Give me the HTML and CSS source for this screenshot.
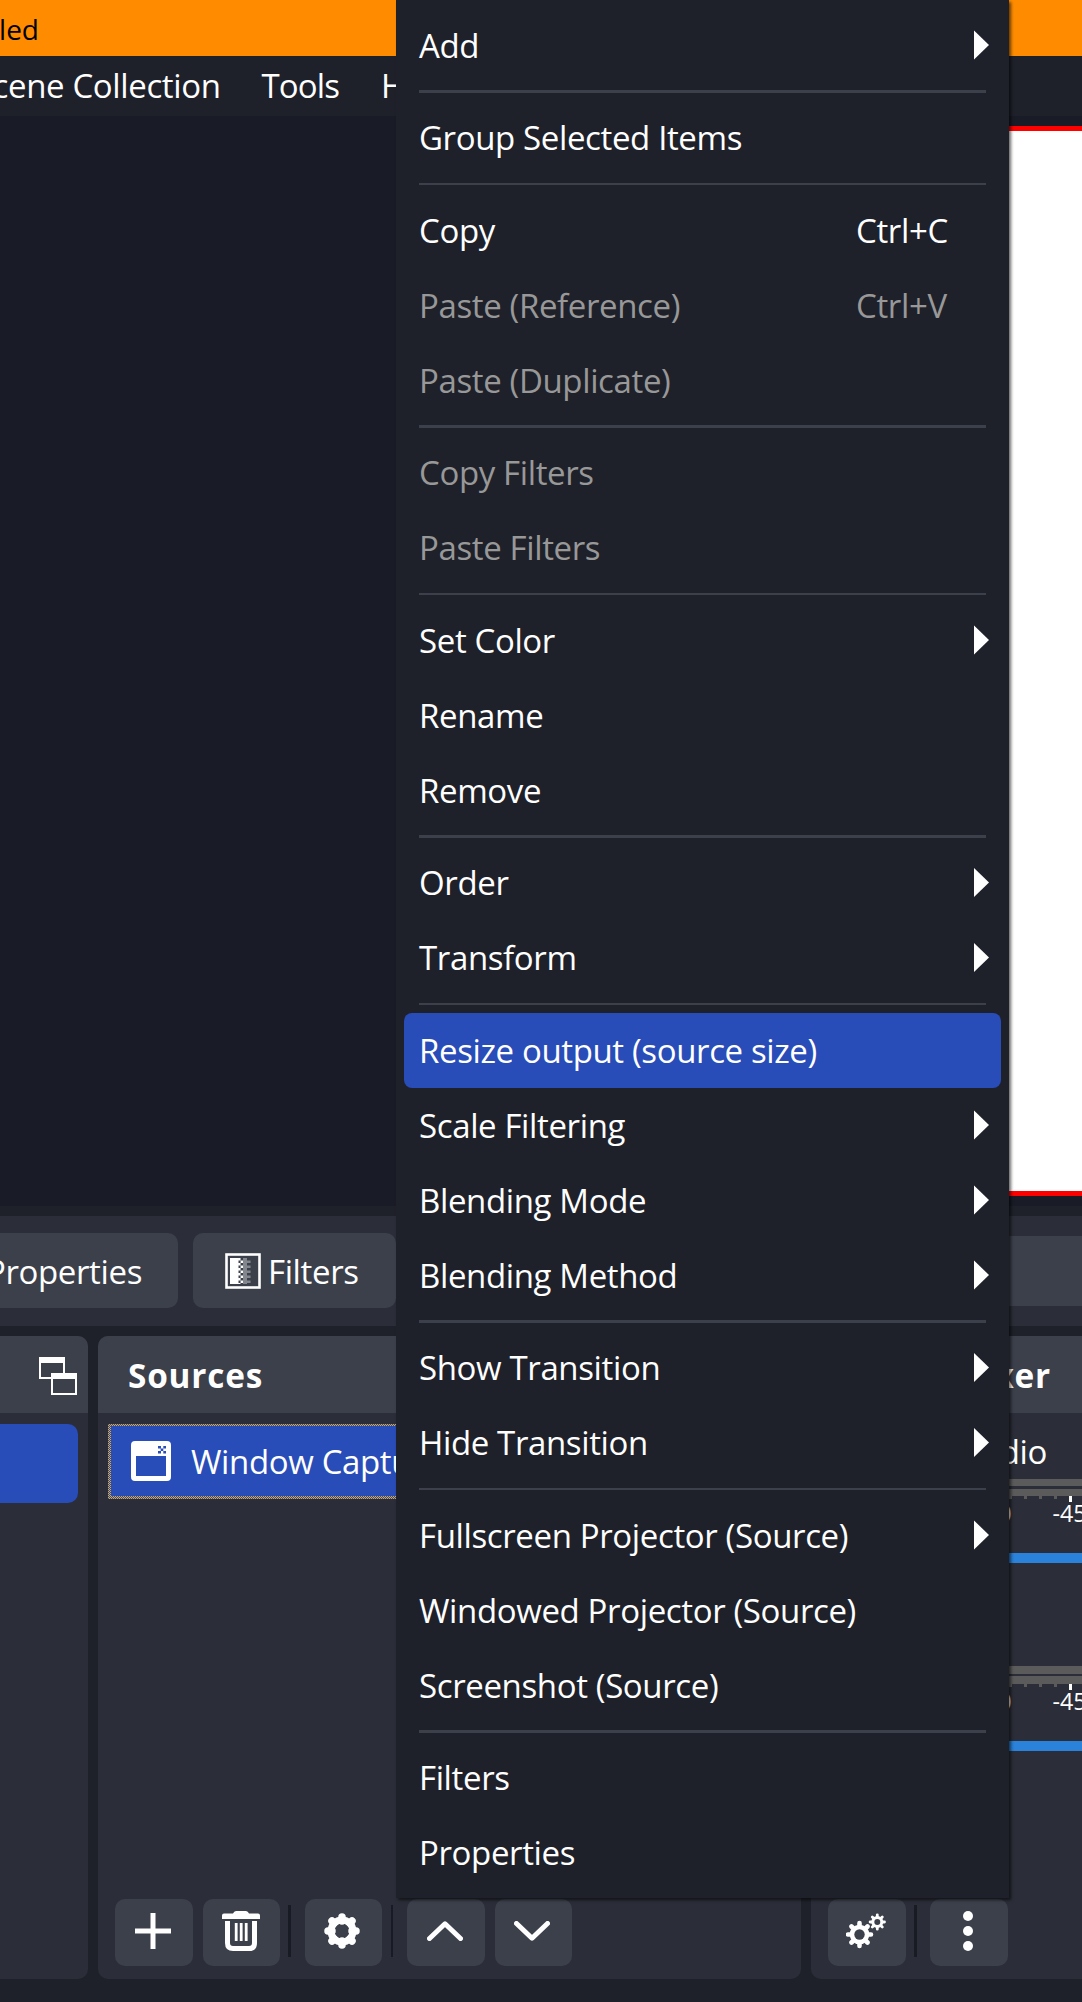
FILE: index.html
```html
<!DOCTYPE html>
<html lang="en">
<head>
<meta charset="utf-8">
<title>Sources menu</title>
<link rel="stylesheet" href="styles.css">
</head>
<body>
<div class="app">
  <header class="titlebar"><span class="title">Untitled</span></header>
  <nav class="menubar"><div class="menubar-items"><span>Scene Collection</span><span class="tight">Tools</span></div><span>Help</span></nav>
  <main class="preview"><div class="canvas"></div></main>
  <section class="toolbar">
    <button class="tool tool-props">Properties</button>
    <button class="tool tool-filters">
      <svg class="filter-icon" width="36" height="36" viewBox="0 0 36 36">
        <rect x="1.5" y="1.5" width="33" height="33" fill="none" stroke="#fefefe" stroke-width="2.6"/>
        <path fill="#fefefe" d="M5 5h8.5v26H5z"/>
        <path stroke="#fefefe" stroke-width="2.5" stroke-dasharray="2.5 2.5" d="M14.3 5v26M16.8 7.5v23"/>
        <path stroke="#85878e" stroke-width="2.5" stroke-dasharray="2.5 2.5" d="M19.3 5v26M21.8 7.5v23M24.3 7.5v23"/>
        <path fill="#85878e" d="M18 5h4v26h-4z"/>
      </svg>
      <span>Filters</span>
    </button>
    <div class="tool-field"></div>
  </section>
  <section class="docks">
    <article class="dock dock-scenes">
      <h2 class="dock-head">
        <svg width="38" height="38" viewBox="0 0 38 38"><g fill="none" stroke="#fefefe" stroke-width="2"><path d="M12 21H1V1h24v15"/><path d="M13 17h24v20H13z"/></g><path fill="#fefefe" d="M0 0h26v6H0zM12 16h26v6H12z"/></svg>
      </h2>
      <div class="scene-selected"></div>
    </article>
    <article class="dock dock-sources">
      <h2 class="dock-head">Sources</h2>
      <div class="source-row">
        <svg width="40" height="40" viewBox="0 0 40 40"><path fill="#fefefe" fill-rule="evenodd" d="M4 0h32a4 4 0 0 1 4 4v32a4 4 0 0 1-4 4H4a4 4 0 0 1-4-4V4a4 4 0 0 1 4-4zM5 15v20h30V15z"/><path fill="#284cb8" d="M27 5h3v2.5h-3zM32.300 5h2.700v2.500h-2.700zM29.700 7.500h2.600v2.500h-2.600zM27 10h3v2.500h-3zM32.300 10h2.700v2.500h-2.700z"/></svg>
        <span>Window Capture</span>
      </div>
      <footer class="dock-tools">
        <button class="icon-btn"><svg width="36" height="36" viewBox="0 0 36 36"><path d="M18 0v36M0 18h36" stroke="#fefefe" stroke-width="5"/></svg></button>
        <button class="icon-btn icon-trash"><svg width="38" height="40" viewBox="0 0 38 40"><path fill="#fefefe" d="M2 2.500h9Q12 0 14 0h10q2 0 3 2.500h9q2 0 2 2V8H0V4.500q0-2 2-2z"/><path d="M5.500 10v22q0 5.500 5.500 5.500h16q5.500 0 5.500-5.500V10" fill="none" stroke="#fefefe" stroke-width="5"/><path d="M14.200 12v18M19.200 12v18M24.200 12v18" stroke="#fefefe" stroke-width="2.800"/></svg></button>
        <i class="rule"></i>
        <button class="icon-btn"><svg width="36" height="36" viewBox="-18 -18 36 36"><g stroke="#fefefe" stroke-width="7.500" stroke-linecap="round"><path d="M0-14V-10M0 14V10M-14 0H-10M14 0H10M-10-10L-8-8M10-10L8-8M-10 10L-8 8M10 10L8 8"/></g><circle r="11" fill="none" stroke="#fefefe" stroke-width="7"/></svg></button>
        <i class="rule rule-thin"></i>
        <button class="icon-btn"><svg width="36" height="20" viewBox="0 0 36 20"><path d="M2.500 17.500L18 2.800l15.500 14.700" fill="none" stroke="#fefefe" stroke-width="5" stroke-linecap="round" stroke-linejoin="round"/></svg></button>
        <button class="icon-btn"><svg width="36" height="20" viewBox="0 0 36 20"><path d="M2.500 2.500L18 17.200 33.500 2.500" fill="none" stroke="#fefefe" stroke-width="5" stroke-linecap="round" stroke-linejoin="round"/></svg></button>
      </footer>
    </article>
    <article class="dock dock-mixer">
      <h2 class="dock-head">Audio Mixer</h2>
      <div class="channel">
        <div class="channel-name">Desktop Audio</div>
        <div class="meter"></div>
        <div class="ticks"><i></i><i></i><i></i><i></i><i class="major"></i></div>
        <div class="scale"><span>-50</span><span>-45</span></div>
        <div class="slider"></div>
      </div>
      <div class="channel channel-second">
        <div class="meter"></div>
        <div class="ticks"><i></i><i></i><i></i><i></i><i class="major"></i></div>
        <div class="scale"><span>-50</span><span>-45</span></div>
        <div class="slider"></div>
      </div>
      <footer class="dock-tools">
        <button class="icon-btn"><svg class="gears" width="40" height="36" viewBox="0 0 40 36"><g transform="translate(13.500 21.500)"><path stroke="#fefefe" stroke-width="4.600" stroke-linecap="round" d="M0-11.500V11.500M-11.500 0H11.500M-8-8L8 8M8-8L-8 8"/><circle r="9.800" fill="#fefefe"/><circle r="5.200" fill="#3c404b"/></g><g transform="translate(31.300 9)"><path stroke="#fefefe" stroke-width="2.800" stroke-linecap="round" d="M0-7.200V7.200M-7.200 0H7.200M-5-5L5 5M5-5L-5 5"/><circle r="6" fill="#fefefe"/><circle r="3" fill="#3c404b"/></g></svg></button>
        <i class="rule"></i>
        <button class="icon-btn"><svg width="10" height="40" viewBox="0 0 10 40"><g fill="#fefefe"><circle cx="5" cy="5" r="5"/><circle cx="5" cy="20" r="5"/><circle cx="5" cy="35" r="5"/></g></svg></button>
      </footer>
    </article>
  </section>
</div>

<div class="context-menu">
  <div class="item sub">Add</div>
  <hr>
  <div class="item">Group Selected Items</div>
  <hr>
  <div class="item">Copy<kbd>Ctrl+C</kbd></div>
  <div class="item off">Paste (Reference)<kbd>Ctrl+V</kbd></div>
  <div class="item off">Paste (Duplicate)</div>
  <hr>
  <div class="item off">Copy Filters</div>
  <div class="item off">Paste Filters</div>
  <hr>
  <div class="item sub">Set Color</div>
  <div class="item">Rename</div>
  <div class="item">Remove</div>
  <hr>
  <div class="item sub">Order</div>
  <div class="item sub">Transform</div>
  <hr>
  <div class="item active">Resize output (source size)</div>
  <div class="item sub">Scale Filtering</div>
  <div class="item sub">Blending Mode</div>
  <div class="item sub">Blending Method</div>
  <hr>
  <div class="item sub">Show Transition</div>
  <div class="item sub">Hide Transition</div>
  <hr>
  <div class="item sub">Fullscreen Projector (Source)</div>
  <div class="item">Windowed Projector (Source)</div>
  <div class="item">Screenshot (Source)</div>
  <hr>
  <div class="item">Filters</div>
  <div class="item">Properties</div>
</div>
</body>
</html>
```
FILE: styles.css
```css
* { box-sizing: border-box; }
body {
  margin: 0;
  width: 1082px;
  height: 2002px;
  overflow: hidden;
  position: relative;
  background: #1f212a;
  color: #fefefe;
  font: 33px/45px "Open Sans", "Noto Sans", sans-serif;
  letter-spacing: -.37px;
}
button { margin: 0; border: 0; padding: 0; font: inherit; letter-spacing: inherit; color: inherit; }
svg { display: block; flex: none; }

.app { display: flex; flex-direction: column; height: 2002px; }

.titlebar {
  height: 56px;
  display: flex;
  background: #ff8c00;
  color: #000;
}
.title {
  width: 39px;
  display: flex;
  justify-content: flex-end;
  font-size: 28px;
  letter-spacing: 0;
  line-height: 59px;
}

.menubar { height: 60px; padding-bottom: 2px; display: flex; align-items: center; gap: 42px; }
.menubar-items { width: 339px; display: flex; justify-content: flex-end; gap: 41px; white-space: nowrap; }
.tight { letter-spacing: -.9px; }

.preview {
  height: 1090px;
  display: flex;
  justify-content: flex-end;
  padding: 10px 0;
  background: #191b26;
}
.canvas { width: 382px; background: #fff; border: solid #f00; border-width: 5px 0; }

.toolbar {
  height: 110px;
  margin: 10px 0;
  display: flex;
  align-items: center;
  background: #2b2e38;
}
.tool {
  height: 75px;
  margin-top: -1px;
  padding-top: 1px;
  display: flex;
  align-items: center;
  background: #3c404b;
  border-radius: 10px;
}
.tool-props { width: 178px; margin-right: 15px; padding-right: 36px; justify-content: flex-end; border-radius: 0 10px 10px 0; }
.tool-filters { width: 203px; padding-left: 32px; gap: 7px; }
.tool-field { height: 70px; margin-left: 50px; flex: 1; background: #3c404b; }

.docks { height: 643px; display: flex; gap: 10px; }
.dock { display: flex; flex-direction: column; background: #2b2e38; border-radius: 10px; overflow: hidden; }
.dock-head {
  height: 77px;
  flex: none;
  margin: 0;
  display: flex;
  align-items: center;
  background: #3c404b;
  font-size: 33.33px;
  font-weight: 700;
  letter-spacing: .8px;
}
.dock-scenes { width: 88px; border-radius: 0 10px 10px 0; }
.dock-scenes .dock-head { justify-content: flex-end; padding: 3px 11px 0 0; }
.scene-selected { width: 78px; height: 79px; margin-top: 11px; background: #284cb8; border-radius: 0 10px 10px 0; }

.dock-sources { width: 703px; }
.dock-sources .dock-head { padding: 2px 0 0 30px; }
.source-row {
  height: 75px;
  margin: 11px 10px 0;
  padding: 0 20px;
  display: flex;
  align-items: center;
  gap: 20px;
  border: 3px solid transparent;
  border-top-width: 2px;
  background:
    linear-gradient(#284cb8, #284cb8) padding-box,
    repeating-conic-gradient(#e8a91c 0 25%, #284cb8 0 50%) 0 0 / 2px 2px border-box;
}

.dock-tools { margin-top: auto; height: 80px; padding: 0 17px; display: flex; align-items: flex-start; }
.icon-btn {
  width: 77.500px;
  height: 67px;
  display: flex;
  align-items: center;
  justify-content: center;
  background: #3c404b;
  border-radius: 10px;
  padding: 0 2px 3px 0;
}
.icon-trash { padding-right: 0; }
.icon-btn + .icon-btn { margin-left: 10px; }
.rule { width: 3px; height: 52px; margin: 6px 13.500px 0 8px; background: #191b24; }
.rule-thin { width: 2px; margin-left: 9px; margin-right: 14px; }

.dock-mixer { flex: 1; border-radius: 10px 0 0 10px; }
.dock-mixer .dock-head { padding: 2px 31px 0 0; justify-content: flex-end; }
.channel { height: 187px; padding-top: 15px; }
.channel-second { padding-top: 66px; }
.channel-name { width: 236px; height: 51px; text-align: right; line-height: 47px; }
.meter { height: 17px; border: solid #5b5b5b; border-width: 7px 0; }
.channel-second .meter { height: 18px; border-width: 8px 0; }
.ticks { height: 6px; margin-left: 198px; display: flex; gap: 12px; }
.ticks i { flex: none; width: 3px; height: 3px; background: #5b5b5b; }
.ticks .major { height: 6px; background: #fefefe; }
.scale { height: 31px; margin-left: 146px; display: flex; font-size: 23.300px; letter-spacing: 0; line-height: 22px; }
.scale span { flex: none; width: 75px; text-align: center; }
.slider { height: 10px; margin-top: 20px; background: #2a82da; }

.context-menu {
  position: absolute;
  left: 396px;
  top: 0;
  width: 613px;
  height: 1898px;
  padding: 8px 8px 0;
  background: #1f212a;
  box-shadow: 2px 2px 3px rgba(0, 0, 0, .6);
}
.item {
  height: 75px;
  display: flex;
  align-items: center;
  padding: 0 12px 1px 15px;
  border-radius: 8px;
  white-space: nowrap;
}
.item kbd { width: 133px; margin-left: auto; font: inherit; }
.item.off { color: #989898; }
.item.active { background: #284cb8; }
.item.sub::after {
  content: "";
  width: 15.500px;
  height: 30px;
  margin-left: auto;
  background: #fefefe;
  clip-path: polygon(0 0, 100% 50%, 0 100%);
}
.context-menu hr { height: 2.500px; margin: 7px 15px 8px; border: 0; background: #3c404b; }
```
